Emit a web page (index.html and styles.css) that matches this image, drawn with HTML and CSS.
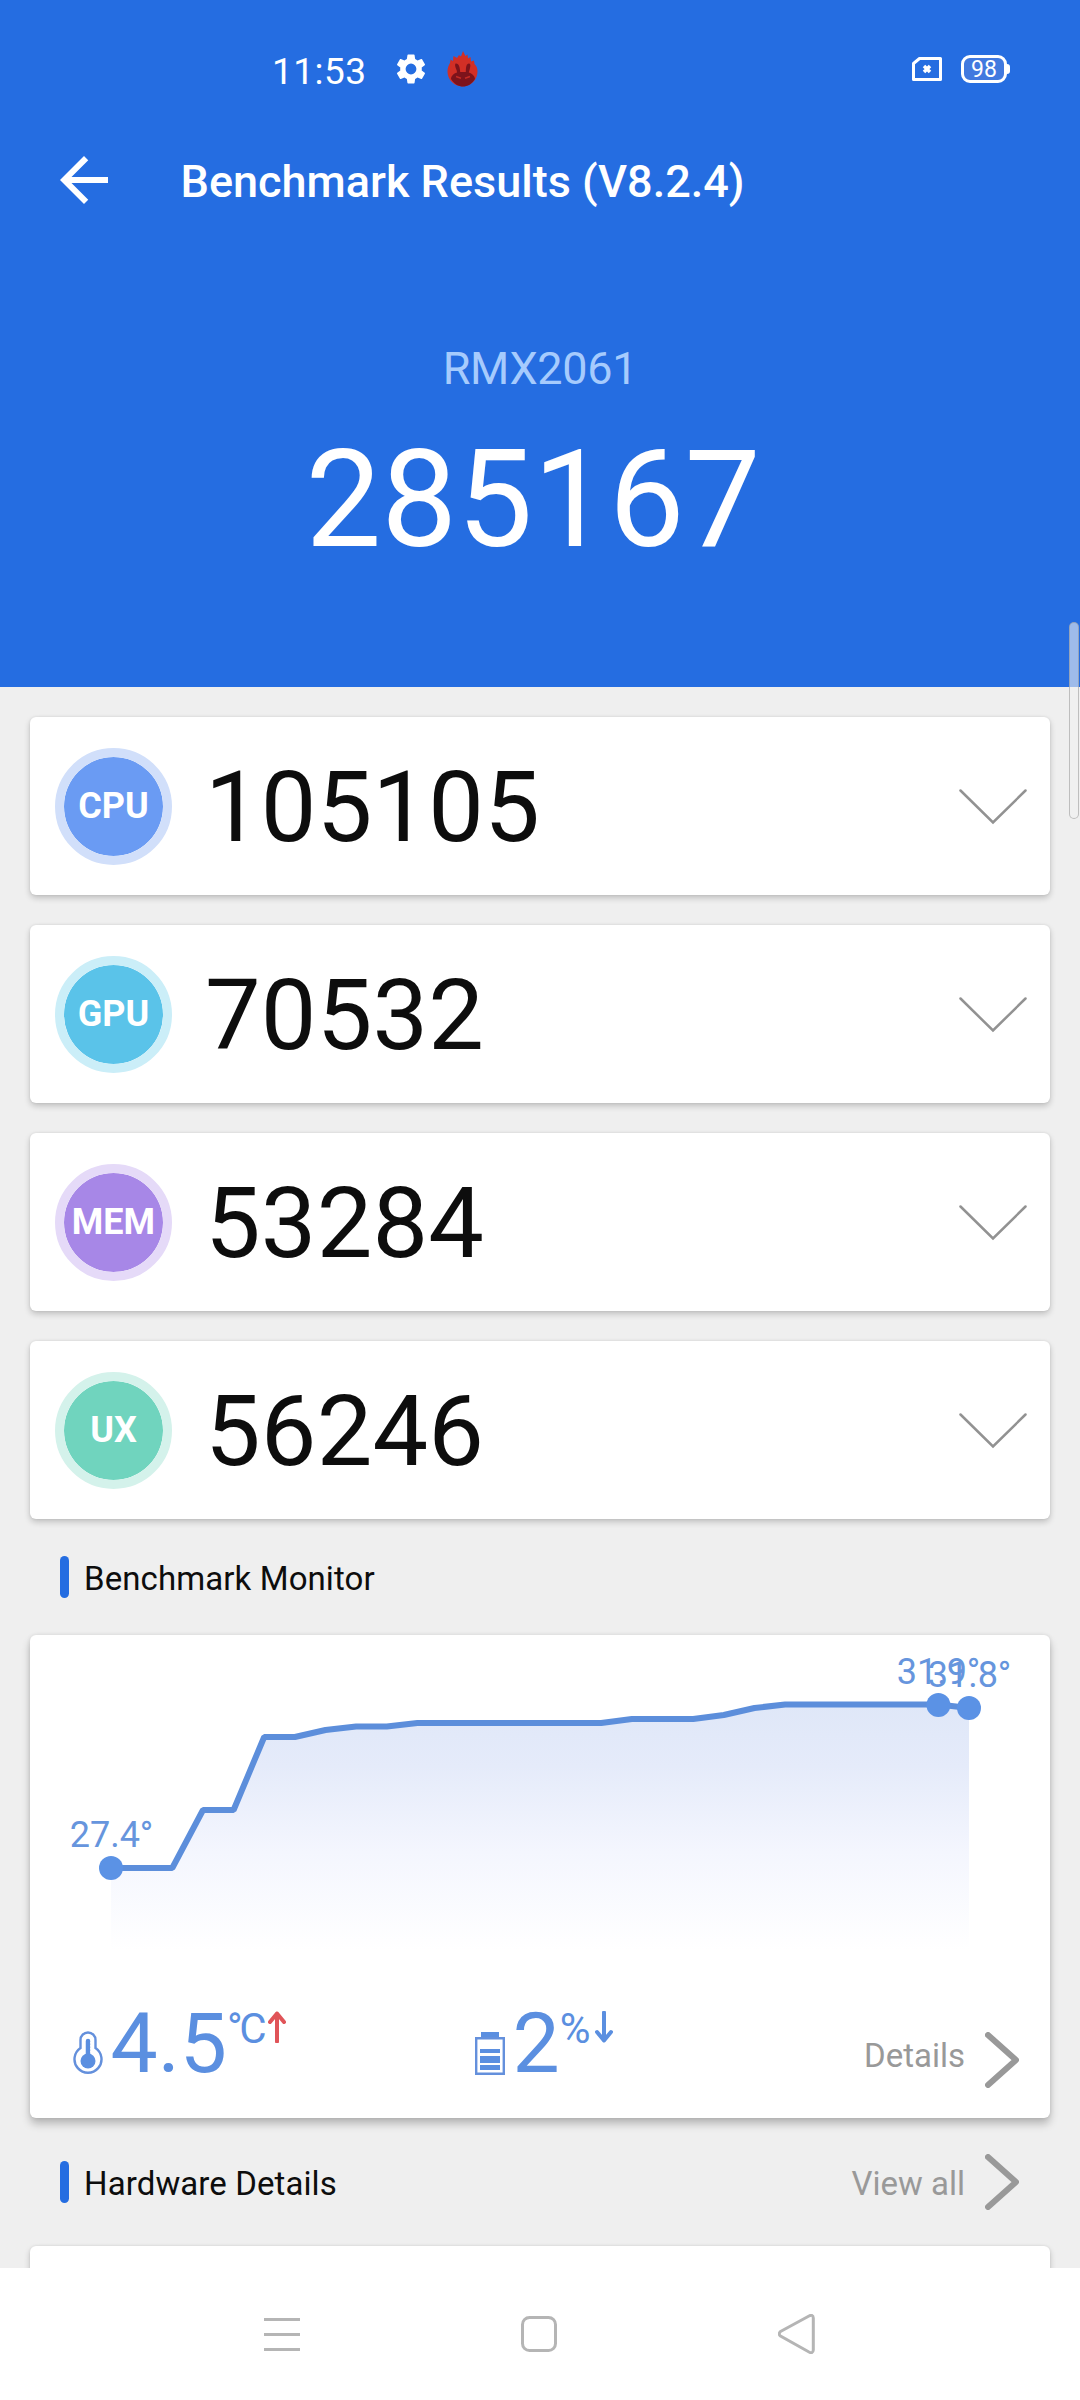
FILE: index.html
```html
<!DOCTYPE html>
<html lang="en">
<head>
<meta charset="utf-8">
<title>Benchmark Results</title>
<link rel="stylesheet" href="styles.css">
</head>
<body>
<div class="screen">
  <header class="hero">
    <div class="status">
      <span class="clock">11:53</span>
      <svg class="gear" viewBox="2 2 20 20"><path fill="#fff" d="M19.140 12.940c.04-.3.06-.61.06-.94 0-.32-.02-.64-.07-.94l2.030-1.580a.49.49 0 0 0 .12-.61l-1.920-3.320a.49.49 0 0 0-.59-.22l-2.390.96c-.5-.38-1.030-.7-1.620-.94l-.36-2.540a.48.48 0 0 0-.48-.41h-3.840c-.24 0-.43.17-.47.41l-.36 2.540c-.59.24-1.130.57-1.620.94l-2.390-.96c-.22-.08-.47 0-.59.22L2.740 8.870c-.12.21-.08.47.12.61l2.030 1.580c-.05.3-.09.63-.09.94s.02.64.07.94l-2.030 1.580a.49.49 0 0 0-.12.61l1.920 3.320c.12.22.37.29.59.22l2.390-.96c.5.38 1.030.7 1.620.94l.36 2.540c.05.24.24.41.48.41h3.840c.24 0 .44-.17.47-.41l.36-2.540c.59-.24 1.130-.56 1.620-.94l2.390.96c.22.08.47 0 .59-.22l1.920-3.320c.12-.22.07-.47-.12-.61l-2.010-1.580zM12 15.600A3.600 3.600 0 1 1 12 8.400a3.600 3.600 0 0 1 0 7.200z"/></svg>
      <svg class="flame" viewBox="0 0 32 36">
        <path fill="#d22f26" d="M3 12l.5-3.500 2.500 1.500.5-5 3.500 2 2-3 2 1.500 2-5.500 2.500 5 2-1.500.5 4 2.500-1.500.5 4.500 3-1 .5 3.500c2.300 2.300 3 4.800 3 7.500a15 15 0 0 1-30 0c0-3.500 1-6 2.500-8.500z"/>
        <path fill="#7d131b" d="M8.500 12.500c3.500-.5 4.500 4 4.700 8.500h5.600c.2-5 .5-8.500 3.200-8.500 2.500 0 1 5-.2 9 4 1 6.200 4.500 6.200 6.500-6 10-18 10-24 0 0-2.500 2.500-5.500 6-6.500 0-3.500-3-6-1.500-9z"/>
        <path d="M9 25.500l5 1.700m9-1.700l-5 1.700" stroke="#c42a24" stroke-width="1.500"/>
      </svg>
      <svg class="sim" viewBox="0 0 30 24"><path d="M7.500 1.500h21v21h-27v-16z" fill="none" stroke="#fff" stroke-width="3" stroke-linejoin="round"/><path d="M12 9l6 6m0-6l-6 6" stroke="#fff" stroke-width="3.500"/></svg>
      <span class="battery">98</span>
    </div>
    <div class="titlebar">
      <svg class="back" viewBox="0 0 24 24"><path fill="#fff" d="M20 11H7.830l5.590-5.590L12 4l-8 8 8 8 1.410-1.410L7.830 13H20v-2z"/></svg>
      <h1 class="title">Benchmark Results (V8.2.4)</h1>
    </div>
    <div class="device">RMX2061</div>
    <div class="total">285167</div>
  </header>

  <main class="content">
    <section class="scores">
      <div class="card score"><span class="badge cpu">CPU</span><span class="value">105105</span><svg class="down" viewBox="0 0 68 36"><path d="M1.500 1.500L34 33.500 66.500 1.500"/></svg></div>
      <div class="card score"><span class="badge gpu">GPU</span><span class="value">70532</span><svg class="down" viewBox="0 0 68 36"><path d="M1.500 1.500L34 33.500 66.500 1.500"/></svg></div>
      <div class="card score"><span class="badge mem">MEM</span><span class="value">53284</span><svg class="down" viewBox="0 0 68 36"><path d="M1.500 1.500L34 33.500 66.500 1.500"/></svg></div>
      <div class="card score"><span class="badge ux">UX</span><span class="value">56246</span><svg class="down" viewBox="0 0 68 36"><path d="M1.500 1.500L34 33.500 66.500 1.500"/></svg></div>
    </section>

    <div class="heading monitor-heading"><span class="mark"></span><h2>Benchmark Monitor</h2></div>

    <section class="card monitor">
      <svg class="chart" viewBox="30 1635 1020 350">
        <defs><linearGradient id="fade" gradientUnits="userSpaceOnUse" x1="0" y1="1705" x2="0" y2="1950"><stop offset="0" stop-color="#dfe7f8"/><stop offset=".25" stop-color="#e5ebfa"/><stop offset=".6" stop-color="#f4f6fe"/><stop offset="1" stop-color="#fff"/></linearGradient></defs>
        <path fill="url(#fade)" d="M111 1868H172.300L203 1810H233.600L264.200 1737H294.900L325.500 1730 356.100 1726.500H386.800L417.400 1723H601.200L631.900 1719H693.200L723.800 1715 754.500 1708 785.100 1704.500H938.400L969 1708V1950H111z"/>
        <path fill="none" stroke="#5c8edb" stroke-width="6" stroke-linejoin="bevel" d="M111 1868H172.300L203 1810H233.600L264.200 1737H294.900L325.500 1730 356.100 1726.500H386.800L417.400 1723H601.200L631.900 1719H693.200L723.800 1715 754.500 1708 785.100 1704.500H938.400L969 1708"/>
        <g fill="#5b92e5"><circle cx="111" cy="1868" r="12"/><circle cx="938.400" cy="1705" r="12"/><circle cx="969" cy="1708" r="12"/></g>
        <g class="label"><text x="111.500" y="1847">27.4°</text><text x="938.500" y="1684">31.9°</text><text x="969.500" y="1687">31.8°</text></g>
      </svg>
      <div class="stats">
        <div class="stat temp">
          <svg class="thermo" viewBox="0 0 30 44"><path d="M7.500 17V9a7.500 7.500 0 0 1 15 0v8a13.500 13.500 0 1 1-15 0z" fill="none" stroke="#6490dc" stroke-width="2.400"/><circle cx="15" cy="30" r="7.500" fill="#5b8fe0"/><path d="M15 10v20" stroke="#5b8fe0" stroke-width="4.500" stroke-linecap="round"/><path d="M18 11v11" stroke="#fff" stroke-width="1.500" stroke-dasharray="1.500 1.500"/></svg>
          <span class="big">4.5</span><span class="unit degree">°C</span>
          <svg class="arrow" viewBox="0 0 18 32"><path d="M9 30.500V2.500M2 11l7-8.500 7 8.500" stroke="#e05458"/></svg>
        </div>
        <div class="stat power">
          <svg class="cell" viewBox="0 0 30 44"><path d="M1.200 7.200h27.600v35.600H1.200z" fill="none" stroke="#6490dc" stroke-width="2.400"/><path d="M6 1h18v5H6zM5 18h20v4H5zM5 25h20v7H5zM5 34.500h20v4.500H5z" fill="#5b8fe0"/><path d="M5 34h20v5H5z" fill="#5b8fe0"/></svg>
          <span class="big">2</span><span class="unit">%</span>
          <svg class="arrow" viewBox="0 0 18 32"><path d="M9 1.500v28M2 21l7 8.500 7-8.500" stroke="#5b8fe0"/></svg>
        </div>
        <div class="more"><span>Details</span><svg class="next" viewBox="0 0 34 56"><path d="M3 3l28 25L3 53"/></svg></div>
      </div>
    </section>

    <div class="heading hardware-heading"><span class="mark"></span><h2>Hardware Details</h2>
      <div class="more"><span>View all</span><svg class="next" viewBox="0 0 34 56"><path d="M3 3l28 25L3 53"/></svg></div>
    </div>
    <section class="card peek"></section>
  </main>

  <nav class="nav">
    <svg class="menu" viewBox="0 0 36 40"><path d="M0 5.500h36M0 20.500h36M0 35.500h36"/></svg>
    <svg class="home" viewBox="0 0 36 40"><rect x="1.500" y="3.500" width="33" height="33" rx="7"/></svg>
    <svg class="prev" viewBox="0 0 37 40"><path d="M2.500 17.500L31 2Q35 0 35.300 4V36Q35 40 31 38L2.500 22Q0 20 2.500 17.500z"/></svg>
  </nav>
  <div class="scrollbar"></div>
</div>
</body>
</html>
```
FILE: styles.css
```css
* { box-sizing: border-box; }
body { margin: 0; font-family: Roboto, sans-serif; background: #efefef; color: #0d0d0d; }
svg { display: block; flex: none; }
h1, h2 { margin: 0; }
.screen { position: relative; width: 1080px; height: 2400px; overflow: hidden; display: flex; flex-direction: column; background: #efefef; }

.hero { height: 687px; background: #256de1; color: #fff; }
.status { display: flex; align-items: center; height: 98px; padding: 40px 69px 0 272px; }
.clock { width: 124px; font-size: 37px; line-height: 58px; letter-spacing: .5px; padding-top: 5px; }
.gear { width: 30px; height: 30px; }
.flame { width: 32px; height: 36px; margin-left: 21px; }
.sim { width: 30px; height: 24px; margin-left: auto; }
.battery { position: relative; width: 46px; height: 28px; margin: 0 4px 0 19px; border: 3px solid #fff; border-radius: 9px; background: #4179df; font-size: 23px; line-height: 24px; text-align: center; }
.battery::after { content: ""; position: absolute; right: -6px; top: 6px; width: 3px; height: 10px; background: #fff; border-radius: 0 3px 3px 0; }
.titlebar { display: flex; align-items: center; height: 72px; margin-top: 46px; padding-left: 48px; }
.back { width: 72px; height: 72px; }
.title { margin-left: 60.5px; font-size: 45px; font-weight: 500; line-height: 60px; padding-top: 3px; }
.device { margin-top: 126px; font-size: 45px; line-height: 54px; text-align: center; color: #a6cbfd; letter-spacing: -.3px; }
.total { margin-top: 25px; font-size: 135px; line-height: 158px; text-align: center; padding-right: 14px; }

.content { height: 1581px; overflow: hidden; padding: 30px 30px 0; }
.card { background: #fff; border-radius: 6px; box-shadow: 0 3px 6px rgba(0,0,0,.2), 0 0 3px rgba(0,0,0,.08); }
.scores { display: flex; flex-direction: column; gap: 30px; }
.score { display: flex; align-items: center; height: 178px; padding: 0 23px 0 24.5px; }
.badge { display: flex; align-items: center; justify-content: center; width: 117px; height: 117px; border: 9px solid; border-radius: 50%; color: #fff; font-size: 36px; font-weight: 700; flex: none; padding-left: 1px; }
.cpu { background: #6a9bf3; background-clip: padding-box; border-color: #d1dffa; }
.gpu { background: #5ac3e9; background-clip: padding-box; border-color: #cbeef8; }
.mem { background: #a787e7; background-clip: padding-box; border-color: #e5daf8; }
.ux { background: #70d4be; background-clip: padding-box; border-color: #d4f2eb; }
.value { margin-left: 33.5px; font-size: 99px; line-height: 116px; letter-spacing: .2px; padding-top: 1px; }
.down { width: 68px; height: 36px; margin: 2px 0 0 auto; fill: none; stroke: #929292; stroke-width: 2.5; stroke-linecap: round; }

.heading { display: flex; align-items: center; padding-left: 30px; }
.monitor-heading { height: 116px; }
.hardware-heading { height: 128px; padding-right: 31px; }
.mark { width: 9px; height: 42px; border-radius: 5px; background: #256de1; }
.heading h2 { margin-left: 15px; font-size: 33px; font-weight: 400; line-height: 40px; padding-top: 3px; letter-spacing: .1px; }

.monitor { display: flex; flex-direction: column; height: 483px; box-shadow: 0 6px 9px rgba(0,0,0,.23), 0 0 4px rgba(0,0,0,.1); }
.chart { width: 1020px; height: 350px; }
.label { font-size: 36px; fill: #6695dd; text-anchor: middle; }
.stats { display: flex; height: 133px; padding: 0 31px 0 43px; color: #5b8fe0; }
.stat { display: flex; align-items: flex-start; }
.temp { width: 402px; }
.thermo, .cell { width: 30px; height: 44px; margin-top: 46px; }
.big { margin: 15px 0 0 7.5px; font-size: 84px; line-height: 88px; }
.unit { font-size: 42px; line-height: 50px; margin-top: 19px; }
.degree { letter-spacing: -3.5px; }
.arrow { width: 18px; height: 32px; margin: 26px 0 0 5px; fill: none; stroke-width: 4; stroke-linecap: round; stroke-linejoin: round; }
.more { display: flex; align-items: center; margin-left: auto; font-size: 33px; color: #999; }
.next { width: 34px; height: 56px; margin-left: 20px; fill: none; stroke: #999; stroke-width: 6; stroke-linecap: round; stroke-linejoin: round; }
.stats .more { align-self: flex-start; margin-top: 47px; }
.stats .more span { padding-bottom: 9px; }
.hardware-heading .more span { padding-top: 3px; }
.peek { height: 100px; }

.nav { position: relative; display: flex; align-items: center; height: 132px; padding: 0 265px 0 264px; justify-content: space-between; background: #fff; fill: none; stroke: #b5b5b5; stroke-width: 3; }
.menu, .home { width: 36px; height: 40px; }
.prev { width: 37px; height: 40px; }
.scrollbar { position: absolute; left: 1069px; top: 622px; width: 10px; height: 197px; border-radius: 5px; background: rgba(240,240,240,.6); border: 1.5px solid rgba(140,140,140,.5); }
```
